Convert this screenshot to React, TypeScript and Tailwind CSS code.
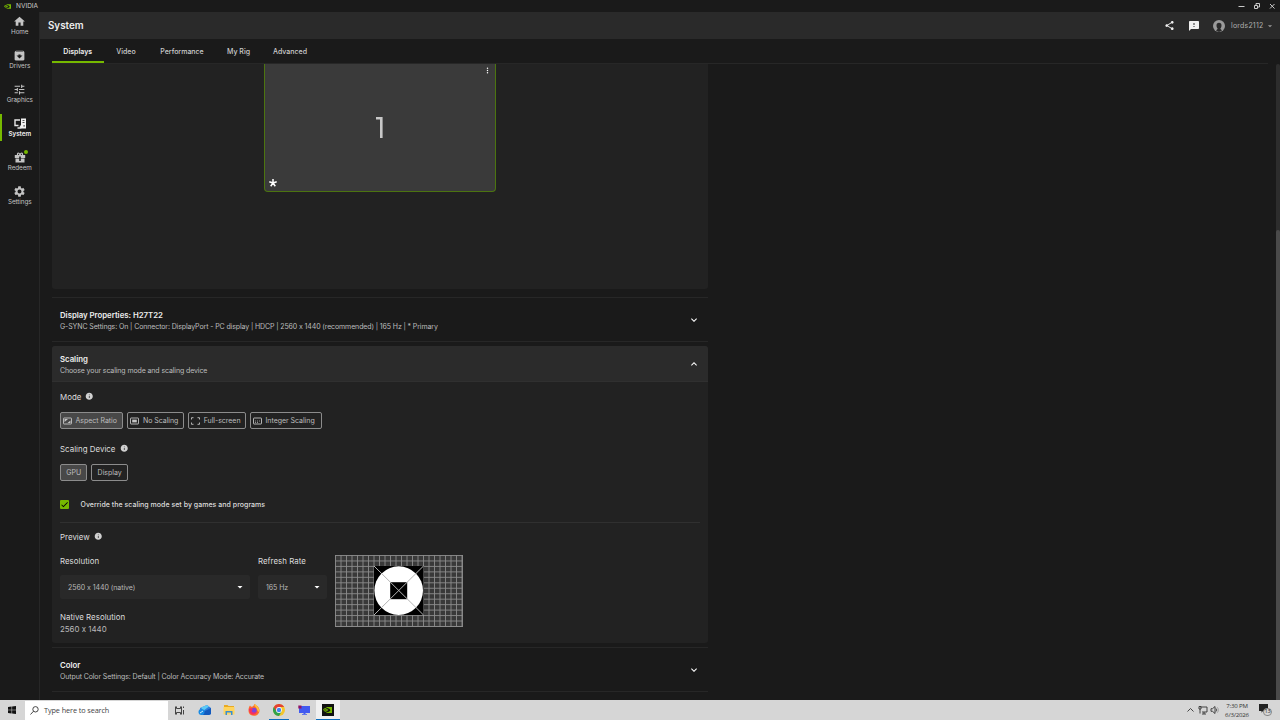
import type { ReactNode } from "react";
import {
  MdArchive,
  MdArrowDropDown,
  MdCheck,
  MdFeedback,
  MdHome,
  MdInfo,
  MdKeyboardArrowDown,
  MdKeyboardArrowUp,
  MdMoreVert,
  MdSettings,
  MdShare,
  MdTune,
} from "react-icons/md";

function NvidiaEye({ className }: { className?: string }) {
  return (
    <svg viewBox="0 0 24 16" className={className} fill="none">
      <path d="M9 0h15v16H9v-2.2c6 .4 10-3.8 11-5.2C17 4.5 13 2.5 9 2.3z" fill="#76b900" />
      <path d="M9 2.3C4.5 2.8 1.5 5.5.5 7.5 2 10.5 5 13.3 9 13.8V12C6 11.3 4 9.3 3.3 7.5 4.5 5.6 6.5 4.4 9 4.2z" fill="#76b900" />
      <path d="M9 5.5c-2 .2-3 1.2-3.5 2.2C6.2 9.3 7.5 10.5 9 10.8c2.3-.2 4-1.4 5-2.9-1-1.4-2.5-2.6-5-2.4z" fill="#76b900" fillOpacity="0.8" stroke="#76b900" />
    </svg>
  );
}

function SystemIcon() {
  return (
    <svg viewBox="0 0 12 11" className="h-[11px] w-[12px]" fill="none">
      <path d="M6 2H1v5.5h3.5M3.5 10h3V7.5" stroke="#e8e8e8" strokeWidth="1.4" />
      <path fillRule="evenodd" d="M7 .5h5v10H7zM8.500 2v.8h2V2zM8.500 4v.8h2V4zM9.500 7.200v1.300h1.200V7.200z" fill="#f2f2f2" />
    </svg>
  );
}

function RedeemIcon() {
  return (
    <svg viewBox="0 0 12 12" className="-mt-px h-[12px] w-[12px]">
      <path d="M.8 4h10.400v3H.8zM1.500 7.500h9v4h-9z" fill="#c4c4c4" />
      <path d="M6 4C5 1.300 3.300 1.300 3.500 4M6 4c1-2.700 2.700-2.700 2.500 0" fill="none" stroke="#c4c4c4" strokeWidth="1.2" />
      <path d="M5.200 5.500h1.600V10H5.200z" fill="#1a1a1a" />
    </svg>
  );
}

const navItems: { label: string; icon: ReactNode; active?: boolean; dot?: boolean }[] = [
  { label: "Home", icon: <MdHome size={13} /> },
  { label: "Drivers", icon: <MdArchive size={13} /> },
  { label: "Graphics", icon: <MdTune size={13} /> },
  { label: "System", icon: <SystemIcon />, active: true },
  { label: "Redeem", icon: <RedeemIcon />, dot: true },
  { label: "Settings", icon: <MdSettings size={13} /> },
];

function Sidebar() {
  return (
    <nav className="flex w-10 shrink-0 flex-col border-r border-[#272727]">
      {navItems.map((item) => (
        <div
          key={item.label}
          className={
            item.active
              ? "relative flex h-[34px] flex-col items-center pt-[3px] pl-[0.5px] text-[#eeeeee]"
              : "relative flex h-[34px] flex-col items-center pt-[3px] pl-[0.5px] text-[#c4c4c4]"
          }
        >
          {item.active && <span className="absolute top-0 left-0 h-[27px] w-[2px] bg-[#76b900]" />}
          <span className="flex h-[13px] items-center">{item.icon}</span>
          {item.dot && <span className="absolute top-[2px] left-[24px] size-[4px] rounded-full bg-[#76b900]" />}
          <span
            className={
              item.active
                ? "text-[6.3px] leading-[8px] font-semibold tracking-[-0.05px]"
                : "text-[6.3px] leading-[8px] tracking-[-0.05px]"
            }
          >
            {item.label}
          </span>
        </div>
      ))}
    </nav>
  );
}

function TitleBar() {
  return (
    <div className="flex h-3 items-center justify-between pr-[4px] pl-[4px]">
      <div className="flex items-center gap-[5px]">
        <NvidiaEye className="h-[5px] w-[7px]" />
        <span className="text-[6.5px] leading-[12px] text-[#c8c8c8]">NVIDIA</span>
      </div>
      <svg viewBox="0 0 38 8" className="h-[8px] w-[38px]" fill="none" stroke="#c8c8c8" strokeWidth="1">
        <path d="M.5 4.500h6M16.500 3.500h3v3h-3zM18 3V1.500h3.500V5H20M32 2l4.500 4.500M36.500 2L32 6.500" />
      </svg>
    </div>
  );
}

function Header() {
  return (
    <header className="flex h-[27px] shrink-0 items-center justify-between bg-[#2a2a2a] pr-[5px] pl-2">
      <h1 className="pt-[2px] text-[9.8px] font-semibold text-[#eeeeee]">System</h1>
      <div className="flex items-center text-[#eeeeee]">
        <MdShare size={11} />
        <MdFeedback size={12} className="ml-[12.5px]" />
        <svg viewBox="0 0 12 12" className="ml-[13.5px] size-3">
          <circle cx="6" cy="6" r="6" fill="#9a9a9a" />
          <path d="M3.500 5.500a2.500 2.800 0 0 1 5 0c0 1.800-.8 2.600-1.200 3.300L9 10.500 6 12l-3-1.500 1.700-1.700C4.300 8.100 3.500 7.300 3.500 5.500z" fill="#2a2a2a" />
        </svg>
        <span className="ml-[6px] w-[33px] pt-px text-[7px] tracking-[0.2px] whitespace-nowrap text-[#b0b0b0]">lords2112</span>
        <MdArrowDropDown size={10} className="ml-[1px] text-[#9a9a9a]" />
      </div>
    </header>
  );
}

function Tabs() {
  return (
    <div className="mr-3 ml-3 flex h-[25px] shrink-0 border-b border-[#272727] text-[7px] leading-[26px] font-medium whitespace-nowrap text-[#cccccc]">
      <div className="h-6 w-[51.5px] border-b-2 border-[#76b900] text-center font-semibold text-[#eeeeee]">Displays</div>
      <div className="w-[45px] text-center">Video</div>
      <div className="w-[67px] text-center">Performance</div>
      <div className="w-[46px] text-center">My Rig</div>
      <div className="w-[57px] text-center">Advanced</div>
    </div>
  );
}

function DisplayArea() {
  return (
    <div className="flex h-[225px] justify-center rounded-b-[3px] bg-[#222222]">
      <div className="relative h-[128px] w-[232px] rounded-b-[4px] border border-t-0 border-[#4c7410] bg-[#3a3a3a]">
        <MdMoreVert size={9} className="absolute top-[1.5px] right-[3px] text-white" />
        <svg viewBox="0 0 8 22" className="absolute top-[52px] left-[111px] h-[22px] w-[8px]" fill="none">
          <path d="M0 2.200H5.300V22" stroke="#c8c8c8" strokeWidth="2.6" />
        </svg>
        <svg viewBox="0 0 8 8" className="absolute bottom-[4px] left-[4px] size-[8px]" fill="none">
          <path d="M4 4V0M4 4L.3 2.800M4 4l3.700-1.200M4 4L1.700 7.300M4 4l2.300 3.300" stroke="white" strokeWidth="1.5" />
        </svg>
      </div>
    </div>
  );
}

function SectionText({ title, detail }: { title: string; detail: string }) {
  return (
    <div className="pt-[2.5px] whitespace-nowrap">
      <div className="text-[7.8px] leading-[11px] font-semibold tracking-[-0.02px] text-[#eeeeee]">{title}</div>
      <div className="text-[7px] leading-[11px] tracking-[-0.11px] text-[#bdbdbd]">{detail}</div>
    </div>
  );
}

function Label({ text, info }: { text: string; info?: boolean }) {
  return (
    <div className="flex h-3 items-center gap-[5px] text-[7.9px] leading-3 tracking-[0.02px] whitespace-nowrap text-[#dddddd]">
      {text}
      {info && <MdInfo size={8.5} className="-mt-px -ml-[1px] text-[#d0d0d0]" />}
    </div>
  );
}

function ModeIcon({ kind }: { kind: string }) {
  return (
    <svg viewBox="0 0 9 8" className="mr-[4px] h-[8px] w-[9px]" fill="none" stroke="#c4c4c4" strokeWidth="0.9">
      {kind !== "full" && <rect x="0.5" y="1" width="8" height="6" rx="0.5" />}
      {kind === "aspect" && <path d="M1.500 5V2H5zM7.500 3.500V6h-3z" fill="#c4c4c4" stroke="none" />}
      {kind === "none" && <rect x="2.2" y="2.6" width="4.6" height="2.8" fill="#c4c4c4" stroke="none" />}
      {kind === "full" && <path d="M.5 2.500V.7h2M6.500.7h2v1.800M8.500 5.500v1.800h-2M2.500 7.300h-2V5.500" />}
      {kind === "integer" && <path d="M2 4h1M4 4h1M6 4h1M2 5.500h1M4 5.500h1" strokeWidth="0.7" />}
    </svg>
  );
}

const modes = [
  { kind: "aspect", label: "Aspect Ratio", cls: "w-[63.4px] bg-[#484848]" },
  { kind: "none", label: "No Scaling", cls: "w-[56.8px]" },
  { kind: "full", label: "Full-screen", cls: "w-[57.8px]" },
  { kind: "integer", label: "Integer Scaling", cls: "w-[71.6px]" },
];

function PreviewPattern() {
  const columns = Array.from({ length: 24 }, (_, i) => 0.5 + i * 5.5);
  const rows = Array.from({ length: 14 }, (_, i) => 0.5 + i * 5.46);
  return (
    <svg viewBox="0 0 128 72" className="h-[72px] w-[128px]">
      <rect width="128" height="72" fill="#393939" />
      <g stroke="#8c8c8c" strokeWidth="0.9">
        {columns.map((x) => (
          <path key={x} d={`M${x} 0V72`} />
        ))}
        {rows.map((y) => (
          <path key={y} d={`M0 ${y}H128`} />
        ))}
        <path d="M127.500 0V72M0 71.500H128" />
      </g>
      <rect x="39" y="11" width="49.5" height="49" fill="black" />
      <circle cx="63.7" cy="35.6" r="24.3" fill="white" />
      <rect x="55.2" y="27.2" width="17" height="17" fill="black" />
      <path d="M39 11l49.500 49M88.500 11L39 60" stroke="#b4b4b4" strokeWidth="1" />
    </svg>
  );
}

function Select({ value }: { value: string }) {
  return (
    <div className="mt-[8px] flex h-6 items-center justify-between rounded-[2px] bg-[#292929] pt-[2px] pr-[4.5px] pl-2 text-[7px] tracking-[-0.05px] text-[#b8b8b8]">
      {value}
      <MdArrowDropDown size={12} className="-mt-[2px] text-white" />
    </div>
  );
}

function ScalingPanel() {
  return (
    <section className="mt-1 h-[297px] overflow-hidden rounded-[3px] bg-[#222222]">
      <div className="flex h-9 items-center justify-between border-b border-[#303030] bg-[#2b2b2b] pr-2 pl-2">
        <SectionText title="Scaling" detail="Choose your scaling mode and scaling device" />
        <MdKeyboardArrowUp size={12} className="text-white" />
      </div>
      <div className="px-2 pt-[9px]">
        <Label text="Mode" info />
        <div className="mt-[9px] flex gap-1">
          {modes.map((mode) => (
            <div
              key={mode.kind}
              className={`flex h-[17px] shrink-0 items-center rounded-[2px] border border-[#8c8c8c] pl-[2px] text-[7px] tracking-[-0.03px] whitespace-nowrap text-[#bdbdbd] ${mode.cls}`}
            >
              <ModeIcon kind={mode.kind} />
              <span className="-ml-[0.5px] pt-px">{mode.label}</span>
            </div>
          ))}
        </div>
        <div className="mt-[14px]">
          <Label text="Scaling Device" info />
        </div>
        <div className="mt-[9px] flex gap-1 text-center text-[7px] leading-[16px] text-[#bdbdbd]">
          <div className="h-[17px] w-[27.4px] rounded-[2px] border border-[#8c8c8c] bg-[#484848]">GPU</div>
          <div className="h-[17px] w-[36.6px] rounded-[2px] border border-[#8c8c8c]">Display</div>
        </div>
        <div className="mt-[18px] flex h-[11px] items-center">
          <div className="flex size-[9px] items-center justify-center rounded-[1px] bg-[#76b900] text-black">
            <MdCheck size={9} />
          </div>
          <span className="ml-[11.5px] pt-px text-[7px] font-medium tracking-[0.03px] whitespace-nowrap text-[#dddddd]">
            Override the scaling mode set by games and programs
          </span>
        </div>
        <div className="mt-[12px] border-t border-[#303030] pt-[8px]">
          <Label text="Preview" info />
        </div>
        <div className="mt-[12px] flex">
          <div className="w-[190px]">
            <Label text="Resolution" />
            <Select value="2560 x 1440 (native)" />
            <div className="mt-[12px]">
              <Label text="Native Resolution" />
              <div className="text-[7.9px] leading-3 text-[#b8b8b8]">2560 x 1440</div>
            </div>
          </div>
          <div className="ml-2 w-[69px]">
            <Label text="Refresh Rate" />
            <Select value="165 Hz" />
          </div>
          <div className="ml-[8px]">
            <PreviewPattern />
          </div>
        </div>
      </div>
    </section>
  );
}

function Taskbar() {
  return (
    <footer className="flex h-5 shrink-0 items-center bg-[#d6d6d6] font-['Open_Sans','Noto_Sans',sans-serif]">
      <div className="flex w-[24.5px] justify-center">
        <svg viewBox="0 0 8 8" className="size-2" fill="#111111">
          <path d="M0 1l3.600-.5v3.200H0zM4.100.4L8 0v3.700H4.100zM0 4.200h3.600v3.200L0 7zM4.100 4.200H8V8l-3.900-.5z" />
        </svg>
      </div>
      <div className="flex h-[19px] w-[143px] items-center self-end bg-white pl-[5px] text-[7.3px] tracking-[-0.1px] text-[#444444]">
        <svg viewBox="0 0 9 9" className="mr-[5.5px] size-[9px]" fill="none" stroke="#333333" strokeWidth="0.9">
          <circle cx="5.5" cy="3.3" r="2.7" />
          <path d="M3.500 5.200L.5 8.500" />
        </svg>
        Type here to search
      </div>
      <div className="flex h-5 items-center">
        <div className="flex w-6 justify-center">
          <svg viewBox="0 0 9 9" className="size-[9px]" fill="none" stroke="#333333" strokeWidth="0.9">
            <path d="M1.500.5v2h4v-2M1.500 8.500v-2h4v2M.5.5v8M6.500.5v8M8.500.5V2M8.500 4v4.500" />
          </svg>
        </div>
        <div className="flex w-[25px] justify-center">
          <svg viewBox="0 0 13 12" className="h-[12px] w-[13px]">
            <path d="M2 4l7-3 4 3v6l-2 1H3z" fill="#2d7fe0" />
            <path d="M3 3.500L9 1l2 1.500L5 7z" fill="#5ccaf5" />
            <path d="M5 8l8-4v6l-2 1H5z" fill="#1259bd" />
            <circle cx="3.5" cy="8" r="3" fill="#198be4" />
            <path d="M2 9l3-2" stroke="white" strokeWidth="0.8" />
          </svg>
        </div>
        <div className="flex w-[25px] justify-center">
          <svg viewBox="0 0 12 10" className="h-[10px] w-[12px]">
            <path d="M1 0h3.500l1 1H11v4H1z" fill="#e9aa20" />
            <path d="M.5 2h11v7.500H.5z" fill="#ffd45d" />
            <path d="M2.500 10V6h7v4H8V7.500H4V10z" fill="#368ed5" />
          </svg>
        </div>
        <div className="flex w-[25px] justify-center">
          <svg viewBox="0 0 12 12" className="size-3">
            <path d="M6.500 0c2 1 2 2 3.300 2.600C12 5 12 8 10 10.300 7 13 2 12 .8 8.500.2 6 .5 3.500 2 1.500l1 1.300 1.800-.4C5.500 2 6 1 6.500 0z" fill="#ff6b2b" />
            <path d="M6.500 0c3 1.500 5.500 5 4.500 8C9 7 9.500 4 6.500 2z" fill="#ffc536" />
            <circle cx="6" cy="6.5" r="2.7" fill="#7c45d8" />
            <path d="M1 5c1-1 3-1 4 .2L3.500 7c1 2 4 2 5.500 0-.5 3-3 4.300-5 3.500S.8 7 1 5z" fill="#f52f63" />
          </svg>
        </div>
        <div className="flex w-[25px] justify-center">
          <div className="flex h-5 w-5 flex-col items-center justify-end border-b border-[#0a6cbd]">
            <svg viewBox="0 0 12 12" className="mb-[3px] size-3">
              <circle cx="6" cy="6" r="6" fill="#f4c52c" />
              <path d="M.8 3A6 6 0 0 0 6 12L8.600 7.500 6 6z" fill="#2fa24c" />
              <path d="M.8 3l2.700 4.500L6 3h5.200A6 6 0 0 0 .8 3z" fill="#e34133" />
              <circle cx="6" cy="6" r="2.9" fill="white" />
              <circle cx="6" cy="6" r="2.2" fill="#4285f4" />
            </svg>
          </div>
        </div>
        <div className="flex w-6 justify-center">
          <svg viewBox="0 0 12 10" className="h-[10px] w-[12px]">
            <path d="M1 1h11v7H1zM5.500 8h2v1h1.500v.7H4V9h1.500z" fill="#415af0" />
            <path d="M.3.500h3.200v3H.3z" fill="#901565" />
          </svg>
        </div>
        <div className="flex h-5 w-6 items-center justify-center border-b border-[#0a6cbd] bg-[#f0f0f0]">
          <div className="flex size-3 items-center justify-center bg-[#111111]">
            <NvidiaEye className="h-[6px] w-[9px]" />
          </div>
        </div>
      </div>
      <div className="mr-[9px] ml-auto flex items-center">
        <svg viewBox="0 0 32 10" className="h-[10px] w-8" fill="none" stroke="#333333" strokeWidth="0.9">
          <path d="M.5 6.500l3-3 3 3M13.500 2H20v5h-5M17 7v2M15 9h4M12 1.500V4h2V1.500zM13 4v4.500" />
          <path d="M24 3.700h1.500L28 1.500v7l-2.500-2.200H24zM29 3.500c.7.800.7 2.200 0 3" />
          <path d="M30.300 2.300c1.300 1.600 1.300 3.800 0 5.400" stroke="#999999" />
        </svg>
        <div className="-mt-px ml-[4px] w-[28px] text-center text-[6.1px] leading-[9px] tracking-[-0.2px] whitespace-nowrap text-[#333333]">
          <div>7:30 PM</div>
          <div>6/3/2026</div>
        </div>
        <div className="relative ml-[8px] size-[12px]">
          <svg viewBox="0 0 9 9" className="size-[9px]" fill="#222222">
            <path d="M0 0h9v7H4L2.500 8.700V7H0z" />
          </svg>
          <span className="absolute top-[4px] left-[4px] flex h-[8px] w-[9px] items-center justify-center rounded-full border border-[#888888] bg-[#d6d6d6] text-[5.5px] leading-none tracking-[-0.2px] text-[#222222]">
            13
          </span>
        </div>
      </div>
    </footer>
  );
}

export default function App() {
  return (
    <div className="flex h-[720px] w-[1280px] flex-col overflow-hidden bg-[#1a1a1a] font-['Inter','Liberation_Sans',sans-serif] [font-feature-settings:'calt'_0]">
      <TitleBar />
      <div className="flex min-h-0 flex-1">
        <Sidebar />
        <div className="flex min-w-0 flex-1 flex-col">
          <Header />
          <Tabs />
          <main className="flex min-h-0 flex-1 justify-between pl-3">
            <div className="w-[656px]">
              <DisplayArea />
              <section className="mt-2 flex h-[45px] items-center justify-between border-y border-[#272727] px-2">
                <SectionText
                  title="Display Properties: H27T22"
                  detail="G-SYNC Settings: On | Connector: DisplayPort - PC display | HDCP | 2560 x 1440 (recommended) | 165 Hz | * Primary"
                />
                <MdKeyboardArrowDown size={12} className="text-white" />
              </section>
              <ScalingPanel />
              <section className="mt-1 flex h-[45px] items-center justify-between border-y border-[#272727] px-2">
                <SectionText title="Color" detail="Output Color Settings: Default | Color Accuracy Mode: Accurate" />
                <MdKeyboardArrowDown size={12} className="text-white" />
              </section>
            </div>
            <div className="flex w-1 flex-col rounded-t-[2px] bg-[#2d2d2d]">
              <div className="mt-[166px] flex-1 rounded-t-[2px] bg-[#4a4a4a]" />
            </div>
          </main>
        </div>
      </div>
      <Taskbar />
    </div>
  );
}
